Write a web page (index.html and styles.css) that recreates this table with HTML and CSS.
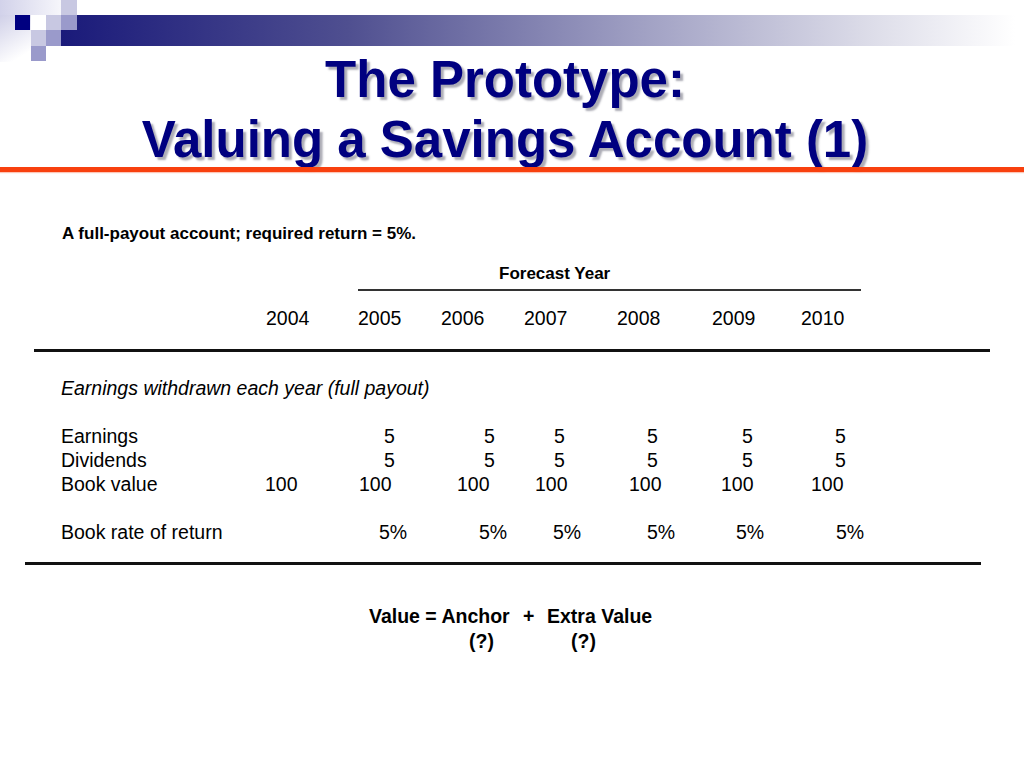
FILE: index.html
```html
<!DOCTYPE html>
<html lang="en">
<head>
<meta charset="utf-8">
<title>The Prototype: Valuing a Savings Account (1)</title>
<link rel="stylesheet" href="styles.css">
</head>
<body>
<header class="masthead">
  <svg class="brand-art" width="1024" height="50" viewBox="0 0 1024 50" aria-hidden="true">
    <defs>
      <linearGradient id="barGrad" gradientUnits="userSpaceOnUse" x1="61" y1="0" x2="1015" y2="0">
        <stop offset="0" stop-color="#1a1a7a"/>
        <stop offset="0.3" stop-color="#4f4f90"/>
        <stop offset="0.6" stop-color="#9e9ec2"/>
        <stop offset="0.85" stop-color="#dddde9"/>
        <stop offset="1" stop-color="#ffffff"/>
      </linearGradient>
      <linearGradient id="paleTop" x1="0" y1="0" x2="1" y2="0">
        <stop offset="0" stop-color="#d2d2ea"/>
        <stop offset="1" stop-color="#f6f6fb"/>
      </linearGradient>
      <linearGradient id="paleSide" x1="0" y1="0" x2="0.4" y2="1">
        <stop offset="0" stop-color="#d0d0e8"/>
        <stop offset="1" stop-color="#ffffff"/>
      </linearGradient>
    </defs>
    <rect x="0" y="0" width="61" height="15" fill="url(#paleTop)"/>
    <rect x="0" y="15" width="31" height="47" fill="url(#paleSide)"/>
    <rect x="15" y="15" width="15" height="15" fill="#000080"/>
    <rect x="61" y="0" width="16" height="15" fill="#c8c8e2"/>
    <rect x="46" y="15" width="15" height="15" fill="#c8c8e2"/>
    <rect x="61" y="15" width="16" height="15" fill="#9a9acb"/>
    <rect x="31" y="30" width="15" height="16" fill="#c8c8e2"/>
    <rect x="46" y="30" width="15" height="16" fill="#9a9acb"/>
    <rect x="31" y="46" width="15" height="15" fill="#9a9acb"/>
    <path d="M77 15 H1024 V46 H61 V30 H77 Z" fill="url(#barGrad)"/>
  </svg>
  <h1 class="title">The Prototype:<br>Valuing a Savings Account (1)</h1>
</header>
<div class="rule-orange"></div>
<main class="slide">
  <p class="intro">A full-payout account; required return = 5%.</p>
  <div class="forecast">Forecast Year</div>
  <div class="forecast-line"></div>
  <div class="row years">
    <span></span><span>2004</span><span>2005</span><span>2006</span><span>2007</span><span>2008</span><span>2009</span><span>2010</span>
  </div>
  <div class="rule-thick rule-a"></div>
  <p class="note">Earnings withdrawn each year (full payout)</p>
  <div class="row r-earn">
    <span>Earnings</span><span>5</span><span>5</span><span>5</span><span>5</span><span>5</span><span>5</span>
  </div>
  <div class="row r-earn r-div">
    <span>Dividends</span><span>5</span><span>5</span><span>5</span><span>5</span><span>5</span><span>5</span>
  </div>
  <div class="row r-book">
    <span>Book value</span><span>100</span><span>100</span><span>100</span><span>100</span><span>100</span><span>100</span><span>100</span>
  </div>
  <div class="row r-rate">
    <span>Book rate of return</span><span>5%</span><span>5%</span><span>5%</span><span>5%</span><span>5%</span><span>5%</span>
  </div>
  <div class="rule-thick rule-b"></div>
  <div class="valuation">
    <div class="val-main"><span>Value = Anchor</span><span>+</span><span>Extra Value</span></div>
    <div class="val-sub"><span>(?)</span><span>(?)</span></div>
  </div>
</main>
</body>
</html>
```
FILE: styles.css
```css
html, body {
  margin: 0;
  padding: 0;
  background: #ffffff;
}
body {
  width: 1024px;
  height: 768px;
  overflow: hidden;
  font-family: "Liberation Sans", Arial, Helvetica, sans-serif;
  color: #000000;
}
.masthead {
  display: block;
}
.brand-art {
  display: block;
  overflow: visible;
}
.title {
  margin: 0;
  padding-right: 14px;
  text-align: center;
  font-size: 51px;
  line-height: 60px;
  font-weight: bold;
  color: #000080;
  text-shadow: 3px 3px 2px rgba(70, 70, 90, 0.45);
}
.rule-orange {
  position: relative;
  margin-top: -3px;
  height: 5px;
  background: #f8400e;
  box-shadow: 0 1px 1px rgba(248, 64, 14, 0.3);
}
.slide p {
  margin: 0;
}
.intro {
  margin-top: 50px !important;
  padding-left: 62px;
  font-size: 17px;
  line-height: 24px;
  font-weight: bold;
}
.forecast {
  margin-top: 16px;
  padding-left: 499px;
  font-size: 17px;
  line-height: 24px;
  font-weight: bold;
}
.forecast-line {
  margin: 3px 0 0 358px;
  width: 503px;
  height: 2px;
  background: #333333;
}
.row {
  display: grid;
  font-size: 19.5px;
  line-height: 24px;
  white-space: nowrap;
}
.years {
  margin-top: 15px;
  grid-template-columns: 266px 92px 83px 83px 93px 95px 89px auto;
}
.rule-thick {
  height: 3px;
  width: 956px;
  background: #111111;
}
.rule-a {
  margin: 19px 0 0 34px;
}
.rule-b {
  margin: 18px 0 0 25px;
}
.note {
  margin-top: 24px !important;
  padding-left: 61px;
  font-size: 19.5px;
  line-height: 24px;
  font-style: italic;
}
.r-earn {
  margin-top: 24px;
  padding-left: 61px;
  grid-template-columns: 323px 100px 70px 93px 95px 93px auto;
}
.r-div {
  margin-top: 0;
}
.r-book {
  padding-left: 61px;
  grid-template-columns: 204px 94px 98px 78px 94px 92px 90px auto;
}
.r-rate {
  margin-top: 24px;
  padding-left: 61px;
  grid-template-columns: 318px 100px 74px 94px 89px 100px auto;
}
.valuation {
  margin-top: 39px;
  font-size: 19.5px;
  line-height: 25px;
  font-weight: bold;
}
.val-main {
  display: grid;
  padding-left: 369px;
  grid-template-columns: 154px 24px auto;
}
.val-sub {
  display: grid;
  padding-left: 469px;
  grid-template-columns: 102px auto;
}
```
